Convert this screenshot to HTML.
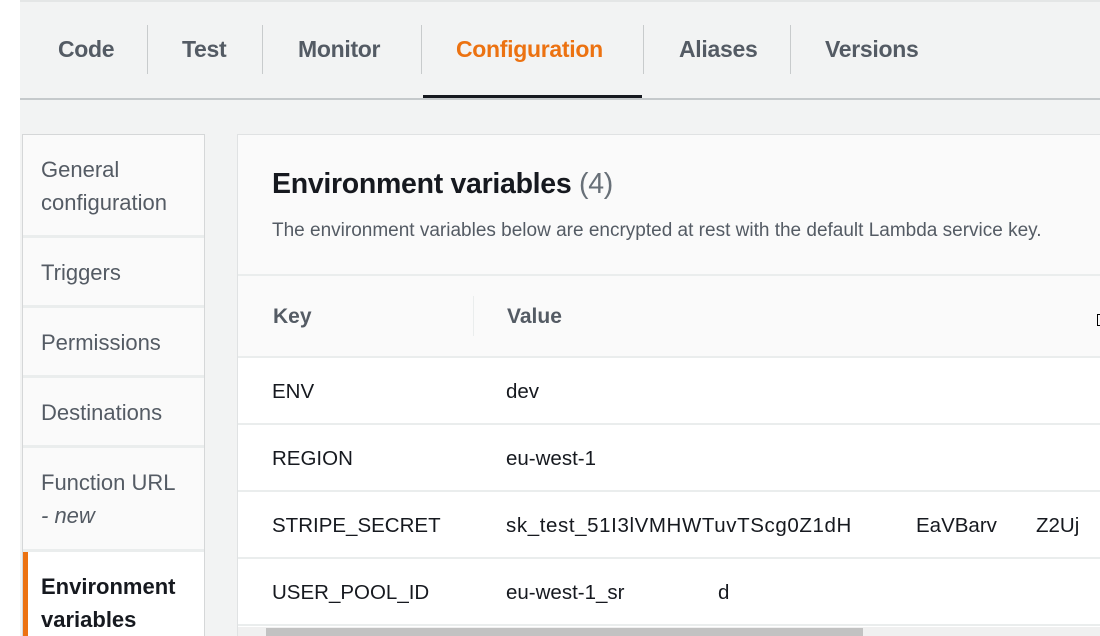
<!DOCTYPE html>
<html><head><style>
*{margin:0;padding:0;box-sizing:border-box}
html,body{width:1100px;height:636px;overflow:hidden}
body{background:#fff;font-family:"Liberation Sans",sans-serif;position:relative}
.bg{position:absolute;left:20px;top:0;width:1080px;height:636px;background:#f2f3f3;border-top:2px solid #e4e6e6}
.tab{position:absolute;top:36px;font-size:23px;font-weight:bold;color:#545b64;letter-spacing:-0.3px}
.sep{position:absolute;top:25px;width:1px;height:49px;background:#c8cbcc}
.line{position:absolute;left:20px;top:98px;width:1080px;height:2px;background:#c5c9cb}
.ul{position:absolute;left:423px;top:95px;width:219px;height:3px;background:#16191f}
.nav{position:absolute;left:22px;top:134px;width:183px;height:510px;background:#fafafa;border:1px solid #d5d7d8}
.ni{position:absolute;left:0;width:181px;border-bottom:3px solid #eaeded;padding:18px 0 0 18px;font-size:22px;color:#545b64;line-height:33px}
.panel{position:absolute;left:237px;top:134px;width:870px;height:510px;background:#fff;border:1px solid #e0e2e3}
.hd{position:absolute;left:0;top:0;width:870px;height:141px;background:#fafafa;border-bottom:2px solid #eaeded}
.th{position:absolute;left:0;top:141px;width:870px;height:82px;background:#fafafa;border-bottom:2px solid #eaeded}
.row{position:absolute;left:0;width:870px;height:67px;border-bottom:2px solid #eaeded;font-size:20.5px;color:#16191f}
.row span{position:absolute;top:22px}
</style></head><body>
<div class="bg"></div>
<div class="tab" style="left:58px">Code</div>
<div class="sep" style="left:147px"></div>
<div class="tab" style="left:182px">Test</div>
<div class="sep" style="left:262px"></div>
<div class="tab" style="left:298px">Monitor</div>
<div class="sep" style="left:421px"></div>
<div class="tab" style="left:456px;color:#ec7211">Configuration</div>
<div class="sep" style="left:643px"></div>
<div class="tab" style="left:679px">Aliases</div>
<div class="sep" style="left:790px"></div>
<div class="tab" style="left:825px">Versions</div>
<div class="line"></div>
<div class="ul"></div>
<div class="nav">
<div class="ni" style="top:0;height:103px;padding-top:18px">General<br>configuration</div>
<div class="ni" style="top:103px;height:70px">Triggers</div>
<div class="ni" style="top:173px;height:70px">Permissions</div>
<div class="ni" style="top:243px;height:70px">Destinations</div>
<div class="ni" style="top:313px;height:104px">Function URL<br><i>- new</i></div>
<div class="ni" style="top:417px;height:100px;background:#fff;border-left:5px solid #ec7211;padding-left:13px;color:#16191f;font-weight:bold;padding-top:18px">Environment<br>variables</div>
</div>
<div class="panel">
<div class="hd">
<div style="position:absolute;left:34px;top:33px;font-size:28.5px;font-weight:bold;color:#16191f;letter-spacing:-0.3px">Environment variables <span style="font-weight:normal;color:#687078">(4)</span></div>
<div style="position:absolute;left:34px;top:85px;font-size:19px;color:#545b64;white-space:nowrap">The environment variables below are encrypted at rest with the default Lambda service key.</div>
</div>
<div class="th">
<div style="position:absolute;left:35px;top:29px;font-size:21px;font-weight:bold;color:#545b64">Key</div>
<div style="position:absolute;left:235px;top:20px;width:1px;height:40px;background:#eaeded"></div>
<div style="position:absolute;left:269px;top:29px;font-size:21px;font-weight:bold;color:#545b64">Value</div>
<div style="position:absolute;left:859px;top:38px;width:8px;height:12px;border:1px solid #000;border-right:none"></div>
</div>
<div class="row" style="top:223px"><span style="left:34px">ENV</span><span style="left:268px">dev</span></div>
<div class="row" style="top:290px"><span style="left:34px">REGION</span><span style="left:268px">eu-west-1</span></div>
<div class="row" style="top:357px"><span style="left:34px">STRIPE_SECRET</span><span style="left:268px;letter-spacing:0.6px">sk_test_51I3lVMHWTuvTScg0Z1dH</span><span style="left:678px">EaVBarv</span><span style="left:798px">Z2Uj</span></div>
<div class="row" style="top:424px"><span style="left:34px">USER_POOL_ID</span><span style="left:268px">eu-west-1_sr</span><span style="left:480px">d</span></div>
<div style="position:absolute;left:0;top:492px;width:870px;height:12px;background:#f0f0f0"></div>
<div style="position:absolute;left:28px;top:493px;width:597px;height:12px;background:#c2c2c2"></div>
</div>
</body></html>
